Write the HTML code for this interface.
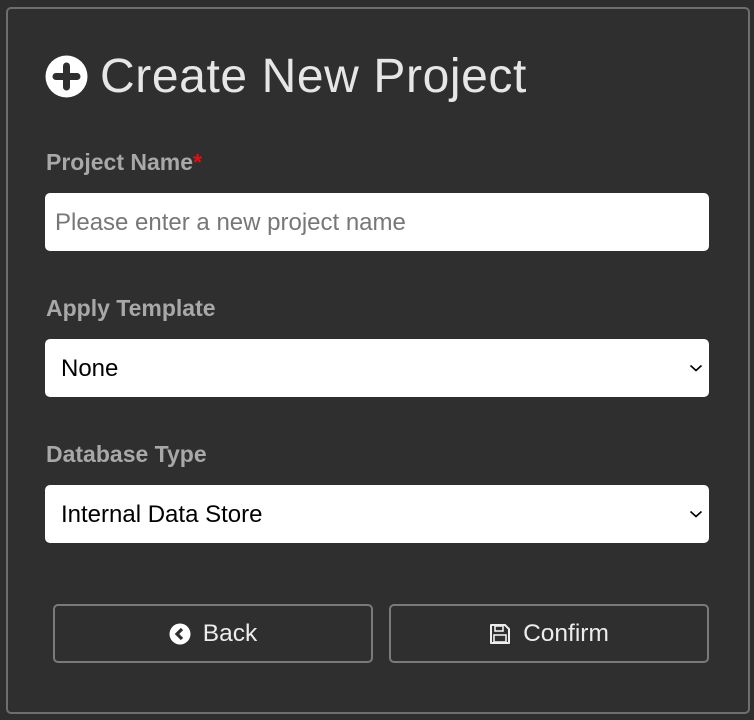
<!DOCTYPE html>
<html><head><meta charset="utf-8"><style>
html,body{margin:0;padding:0;width:754px;height:720px;background:#2e2e2e;overflow:hidden;font-family:"Liberation Sans",sans-serif}
.panel{position:absolute;left:6px;top:7px;width:740px;height:703px;border:2px solid #6e6e6e;border-radius:5px;background:#2f2f2f}
.title{position:absolute;left:100px;top:48px;font-size:48px;letter-spacing:0.6px;color:#e6e6e6;line-height:58px}
.ic{position:absolute;left:45px;top:55px}
.lbl{position:absolute;left:46px;font-size:23px;font-weight:bold;color:#a8a8a8}
.lbl span{color:#e01010}
.box{position:absolute;left:45px;width:664px;height:58px;background:#fff;border-radius:5px;box-sizing:border-box}
.box .t{position:absolute;left:16px;top:16px;font-size:24px;color:#000}
.box .ph{left:10px;color:#777;font-size:24px;top:16px}
.chev{position:absolute;right:6px;top:24px}
.btn{position:absolute;top:604px;width:320px;height:59px;border:2px solid #7a7a7a;border-radius:5px;box-sizing:border-box;color:#ececec;font-size:24.5px;display:flex;align-items:center;justify-content:center;gap:12px}
</style></head><body>
<div class="panel"></div>
<svg class="ic" width="43" height="43" viewBox="0 0 43 43"><circle cx="21.5" cy="21.5" r="21" fill="#fff"/><path d="M21.5 11v21M11 21.5h21" stroke="#2f2f2f" stroke-width="7" stroke-linecap="round"/></svg>
<div class="title">Create New Project</div>
<div class="lbl" style="top:149px">Project Name<span>*</span></div>
<div class="box" style="top:193px"><div class="t ph">Please enter a new project name</div></div>
<div class="lbl" style="top:295px">Apply Template</div>
<div class="box" style="top:339px"><div class="t">None</div><svg class="chev" width="14" height="10" viewBox="0 0 14 10"><path d="M1.5 2.5l5.5 5 5.5-5" fill="none" stroke="#000" stroke-width="1.6"/></svg></div>
<div class="lbl" style="top:441px">Database Type</div>
<div class="box" style="top:485px"><div class="t">Internal Data Store</div><svg class="chev" width="14" height="10" viewBox="0 0 14 10"><path d="M1.5 2.5l5.5 5 5.5-5" fill="none" stroke="#000" stroke-width="1.6"/></svg></div>
<div class="btn" style="left:53px"><svg width="22" height="22" viewBox="0 0 22 22"><circle cx="11" cy="11" r="10.5" fill="#fff"/><path d="M13 6l-5 5 5 5" fill="none" stroke="#2f2f2f" stroke-width="3.2"/></svg><span>Back</span></div>
<div class="btn" style="left:389px"><svg width="22" height="22" viewBox="0 0 22 22"><path d="M2 2h14l4 4v14H2z" fill="none" stroke="#eee" stroke-width="2" stroke-linejoin="round"/><rect x="6" y="3" width="8" height="5" fill="none" stroke="#eee" stroke-width="1.6"/><rect x="5" y="12" width="12" height="7" fill="none" stroke="#eee" stroke-width="1.6"/></svg><span>Confirm</span></div>
</body></html>
